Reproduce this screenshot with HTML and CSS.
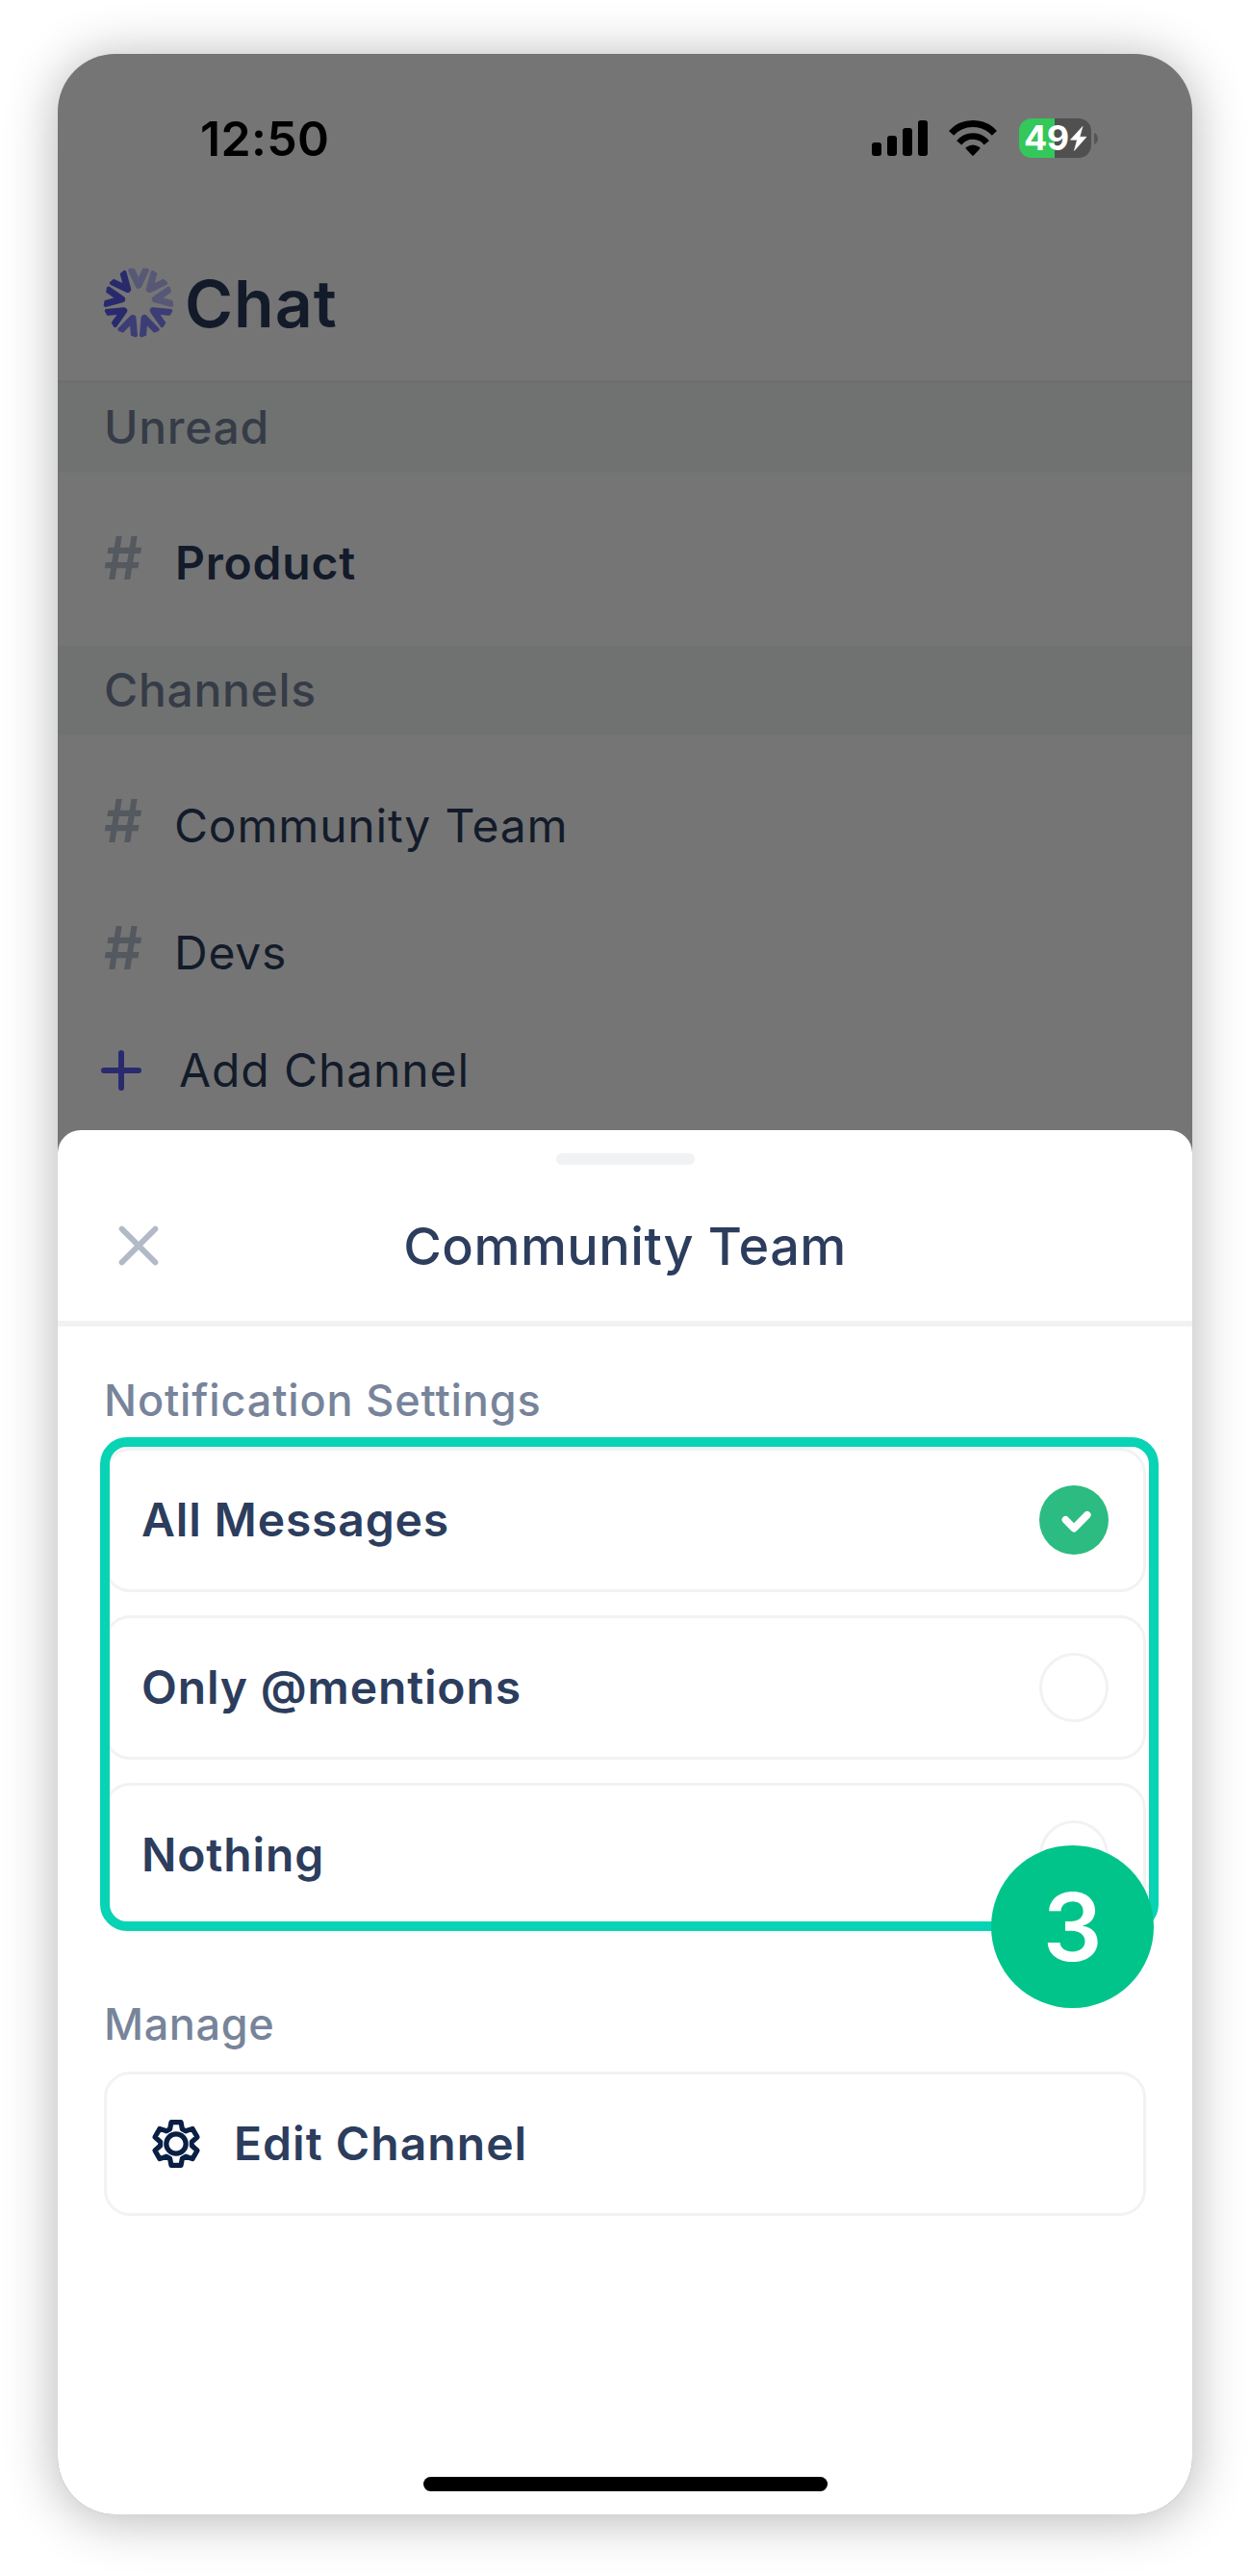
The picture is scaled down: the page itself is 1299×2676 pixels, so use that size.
FILE: index.html
```
<!DOCTYPE html>
<html lang="en">
<head>
<meta charset="utf-8">
<title>Chat</title>
<link rel="stylesheet" href="styles.css">
</head>
<body>
<main class="phone">
  <section class="app">
    <div class="status">
      <span class="time">12:50</span>
      <div class="status-icons">
        <svg class="signal" width="48" height="37" viewBox="0 0 48 37">
          <rect x="0" y="23" width="10" height="14" rx="3"/>
          <rect x="16" y="16" width="10" height="21" rx="3"/>
          <rect x="32" y="8" width="10" height="29" rx="3"/>
          <rect x="48" y="0" width="10" height="37" rx="3"/>
        </svg>
        <svg class="wifi" width="52" height="37" viewBox="-26 0 52 37">
          <path d="M-22.4,13.3 A30.5,30.5 0 0 1 22.4,13.3" fill="none" stroke="#000" stroke-width="7"/>
          <path d="M-14.3,23.3 A18.4,18.4 0 0 1 14.3,23.3" fill="none" stroke="#000" stroke-width="6.7"/>
          <path d="M-7.3,29.6 Q-8,28.6 -7,28 Q0,22.8 7,28 Q8,28.6 7.3,29.6 L0.7,36.6 Q0,37.2 -0.7,36.6 Z"/>
        </svg>
        <div class="battery">
          <span class="battery-level">49</span>
          <svg class="bolt" width="18" height="26" viewBox="0 0 18 26">
            <path d="M13,0.4 L0.4,14.2 H7.4 L4.4,25.4 L17,11.2 H10 Z" fill="#fff" stroke="#fff" stroke-width=".6" stroke-linejoin="round"/>
          </svg>
        </div>
        <svg class="nub" width="4" height="12" viewBox="0 0 4 12"><path d="M0,0 Q4,1.8 4,6 T0,12 Z" fill="#555"/></svg>
      </div>
    </div>

    <header class="app-header">
      <svg class="logo" width="74" height="74" viewBox="-37 -37 74 74">
        <defs>
          <clipPath id="sector"><path d="M0,1 L-11.5,-32.4 L-9.8,-35.2 H9.8 L11.5,-32.4 Z"/></clipPath>
          <g id="petal" clip-path="url(#sector)"><path d="M-9.4,-38 L0,-17.6 L9.4,-38" fill="none" stroke-width="7" stroke-linejoin="round"/></g>
        </defs>
        <g stroke="#575876"><use href="#petal"/><use href="#petal" transform="rotate(40)"/><use href="#petal" transform="rotate(80)"/></g>
        <g stroke="#3d3d76"><use href="#petal" transform="rotate(120)"/><use href="#petal" transform="rotate(160)"/><use href="#petal" transform="rotate(200)"/></g>
        <g stroke="#292a6d"><use href="#petal" transform="rotate(240)"/><use href="#petal" transform="rotate(280)"/><use href="#petal" transform="rotate(320)"/></g>
      </svg>
      <h1 class="app-title">Chat</h1>
    </header>

    <h2 class="band band-first">Unread</h2>
    <div class="channel channel-unread"><span class="hash">#</span><span class="channel-name">Product</span></div>
    <h2 class="band">Channels</h2>
    <div class="channel channel-first"><span class="hash">#</span><span class="channel-name">Community Team</span></div>
    <div class="channel"><span class="hash">#</span><span class="channel-name">Devs</span></div>
    <div class="add-channel">
      <svg width="42" height="42" viewBox="0 0 42 42"><path d="M21,3 V39 M3,21 H39" stroke="#2a2b6f" stroke-width="6" stroke-linecap="round"/></svg>
      <span>Add Channel</span>
    </div>
  </section>

  <section class="sheet">
    <div class="grabber"></div>
    <header class="sheet-header">
      <svg class="close" width="42" height="42" viewBox="0 0 42 42"><path d="M3.6,3.6 L38.4,38.4 M38.4,3.6 L3.6,38.4" stroke="#b2b9c7" stroke-width="5.8" stroke-linecap="round"/></svg>
      <h2 class="sheet-title">Community Team</h2>
    </header>
    <div class="sheet-body">
      <h3 class="label">Notification Settings</h3>
      <div class="options">
        <div class="card"><span class="card-text">All Messages</span>
          <span class="radio radio-on"><svg width="72" height="72" viewBox="0 0 72 72"><path d="M27.4,35.8 L36,44.7 L49.8,30.8" fill="none" stroke="#fff" stroke-width="7.6" stroke-linecap="round" stroke-linejoin="round"/></svg></span>
        </div>
        <div class="card"><span class="card-text">Only @mentions</span><span class="radio"></span></div>
        <div class="card"><span class="card-text">Nothing</span><span class="radio"></span></div>
        <div class="highlight"></div>
        <div class="step">3</div>
      </div>
      <h3 class="label label-manage">Manage</h3>
      <div class="card card-edit">
        <svg class="gear" width="52" height="52" viewBox="-26 -26 52 52" fill="none" stroke="#0a1f44" stroke-width="5.2" stroke-linejoin="round">
          <circle r="10.2"/>
          <path d="M-5,-22.4 H5 L6.4,-15.2 L10,-13.2 L17,-15.6 L22,-7 L16.4,-2 V2 L22,7 L17,15.6 L10,13.2 L6.4,15.2 L5,22.4 H-5 L-6.4,15.2 L-10,13.2 L-17,15.6 L-22,7 L-16.4,2 V-2 L-22,-7 L-17,-15.6 L-10,-13.2 L-6.4,-15.2 Z"/>
        </svg>
        <span class="card-text">Edit Channel</span>
      </div>
    </div>
    <div class="home-indicator"></div>
  </section>
</main>
</body>
</html>
```
FILE: styles.css
```
* { box-sizing: border-box; }
body {
  margin: 0;
  padding: 56px 60px 64px;
  background: #fff;
  font-family: Inter, "Liberation Sans", sans-serif;
}
h1, h2, h3 { margin: 0; }
svg { display: block; flex: none; }

.phone {
  display: flex;
  flex-direction: column;
  width: 1179px;
  height: 2556px;
  border-radius: 60px;
  overflow: hidden;
  background: #757575;
  box-shadow: 0 4px 54px rgba(0, 0, 0, .3);
}

/* dimmed app behind the sheet */
.app { height: 1118px; flex: none; }
.status {
  display: flex;
  justify-content: space-between;
  align-items: center;
  height: 176px;
  padding: 0 98px 0 148px;
}
.time { font-size: 50px; font-weight: 600; letter-spacing: .3px; }
.status-icons { display: flex; align-items: center; margin-top: -1px; }
.signal { overflow: visible; margin-right: 31px; }
.wifi { margin-right: 22px; }
.battery {
  display: flex;
  align-items: center;
  width: 75px;
  height: 41px;
  padding-left: 5px;
  border-radius: 13px;
  background: linear-gradient(90deg, #34c759 37px, #505050 37px);
}
.battery-level {
  width: 48px;
  color: #fff;
  font-size: 36px;
  font-weight: 700;
  line-height: 41px;
  letter-spacing: -.6px;
}
.nub { margin-left: 3px; }

.app-header {
  display: flex;
  align-items: center;
  height: 163px;
  padding: 3px 47px 0;
}
.logo { margin-top: -2px; }
.app-title {
  margin-left: 11px;
  color: #131b2a;
  font-size: 68px;
  font-weight: 600;
  letter-spacing: 1px;
}
.band {
  display: flex;
  align-items: center;
  height: 93px;
  padding: 0 48px 2px;
  background: #707271;
  color: #363c47;
  font-size: 48px;
  font-weight: 500;
  letter-spacing: .7px;
}
.band-first { height: 96px; border-top: 3px solid #6c6f6f; }
.channel {
  display: grid;
  grid-template-columns: 73px 1fr;
  align-items: center;
  height: 132px;
  padding: 0 0 2px 48px;
  color: #131b2a;
  font-size: 48px;
  letter-spacing: .8px;
}
.channel-unread {
  grid-template-columns: 74px 1fr;
  height: 180px;
  padding-top: 8px;
  font-weight: 600;
}
.channel-first { height: 160px; padding-top: 28px; }
.hash {
  margin-top: -9px;
  color: #54585f;
  font-size: 62px;
  font-weight: 600;
  line-height: 70px;
  letter-spacing: 0;
}
.add-channel {
  display: flex;
  align-items: center;
  gap: 39px;
  height: 111px;
  padding-left: 45px;
  color: #131b2a;
  font-size: 48px;
  letter-spacing: .9px;
}

/* bottom sheet */
.sheet {
  display: flex;
  flex-direction: column;
  align-items: center;
  flex: 1;
  padding: 24px 0;
  border-radius: 24px 24px 0 0;
  background: #fff;
}
.grabber { width: 144px; height: 12px; flex: none; border-radius: 6px; background: #f1f2f4; }
.sheet-header {
  display: grid;
  grid-template-columns: 105px 1fr 105px;
  align-items: center;
  width: 100%;
  height: 168px;
  padding-top: 6px;
  border-bottom: 6px solid #f1f2f4;
}
.close { margin-left: 63px; }
.sheet-title {
  color: #2c3d5d;
  font-size: 54px;
  font-weight: 500;
  letter-spacing: .5px;
  text-align: center;
}
.sheet-body { width: 100%; padding: 0 48px; }
.label {
  display: flex;
  align-items: center;
  height: 126px;
  padding-top: 26px;
  color: #77849a;
  font-size: 45px;
  font-weight: 500;
  letter-spacing: .85px;
}
.label-manage { height: 150px; padding-top: 50px; letter-spacing: .6px; }
.options { position: relative; display: grid; gap: 24px; }
.card {
  display: flex;
  align-items: center;
  justify-content: space-between;
  height: 150px;
  padding: 0 36px;
  border: 3px solid #f1f2f4;
  border-radius: 27px;
  color: #2c3d5d;
  font-size: 48px;
  font-weight: 600;
  letter-spacing: .85px;
}
.card-text { margin-top: -2px; }
.card-edit { justify-content: flex-start; gap: 34px; padding-left: 46px; letter-spacing: 1.05px; }
.radio { width: 72px; height: 72px; border: 3px solid #f1f2f4; border-radius: 50%; }
.radio-on { border: 0; background: #2cbb80; }
.highlight {
  position: absolute;
  left: -4px;
  top: -11px;
  width: 1100px;
  height: 513px;
  border: 10px solid #08d3b4;
  border-radius: 28px;
}
.step {
  position: absolute;
  left: 922px;
  top: 413px;
  width: 169px;
  height: 169px;
  border-radius: 50%;
  background: #00c48a;
  color: #fff;
  font-size: 97px;
  font-weight: 600;
  line-height: 169px;
  text-align: center;
}
.home-indicator { width: 420px; height: 15px; margin-top: auto; border-radius: 8px; background: #000; }
```
